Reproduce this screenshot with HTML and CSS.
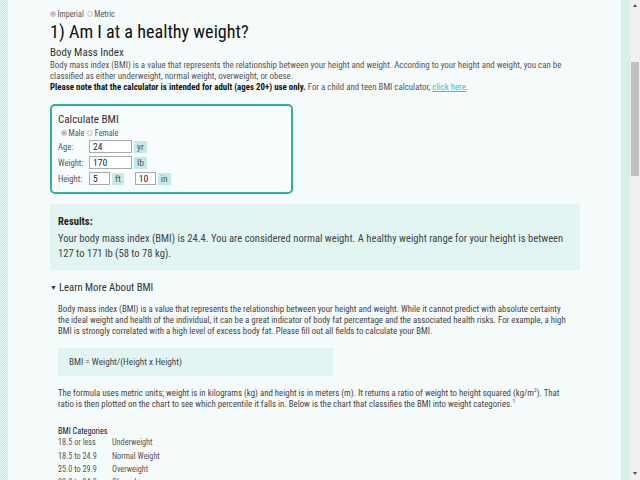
FILE: index.html
```html
<!DOCTYPE html>
<html lang="en">
<head>
<meta charset="utf-8">
<title>BMI Calculator</title>
<link rel="stylesheet" href="styles.css">
</head>
<body>
<div class="frame">
  <main class="content">
    <div class="units">
      <span class="radio checked"></span><span class="rlabel">Imperial</span>
      <span class="radio"></span><span class="rlabel">Metric</span>
    </div>
    <h1 class="title">1) Am I at a healthy weight?</h1>
    <h2 class="subtitle">Body Mass Index</h2>
    <p class="intro">Body mass index (BMI) is a value that represents the relationship between your height and weight. According to your height and weight, you can be classified as either underweight, normal weight, overweight, or obese.<br><strong>Please note that the calculator is intended for adult (ages 20+) use only.</strong> For a child and teen BMI calculator, <a href="#" class="link">click here</a>.</p>

    <section class="calc">
      <h3 class="calc-title">Calculate BMI</h3>
      <div class="sex">
        <span class="radio checked"></span><span class="rlabel">Male</span>
        <span class="radio"></span><span class="rlabel">Female</span>
      </div>
      <div class="row">
        <span class="lbl">Age:</span>
        <span class="inp wide">24</span><span class="unit">yr</span>
      </div>
      <div class="row">
        <span class="lbl">Weight:</span>
        <span class="inp wide">170</span><span class="unit">lb</span>
      </div>
      <div class="row">
        <span class="lbl">Height:</span>
        <span class="inp short">5</span><span class="unit">ft</span>
        <span class="inp short gapl">10</span><span class="unit">in</span>
      </div>
    </section>

    <section class="results">
      <h4 class="results-title">Results:</h4>
      <p class="results-text">Your body mass index (BMI) is 24.4. You are considered normal weight. A healthy weight range for your height is between 127 to 171 lb (58 to 78 kg).</p>
    </section>

    <div class="more">
      <div class="more-head"><span class="tri">&#9660;</span>Learn More About BMI</div>
      <div class="more-body">
        <p class="para">Body mass index (BMI) is a value that represents the relationship between your height and weight. While it cannot predict with absolute certainty the ideal weight and health of the individual, it can be a great indicator of body fat percentage and the associated health risks. For example, a high BMI is strongly correlated with a high level of excess body fat. Please fill out all fields to calculate your BMI.</p>
        <div class="formula">BMI = Weight/(Height x Height)</div>
        <p class="para">The formula uses metric units; weight is in kilograms (kg) and height is in meters (m). It returns a ratio of weight to height squared (kg/m<sup>2</sup>). That ratio is then plotted on the chart to see which percentile it falls in. Below is the chart that classifies the BMI into weight categories.<sup>1</sup></p>
        <table class="cats">
          <thead><tr><th colspan="2">BMI Categories</th></tr></thead>
          <tbody>
            <tr><td>18.5 or less</td><td>Underweight</td></tr>
            <tr><td>18.5 to 24.9</td><td>Normal Weight</td></tr>
            <tr><td>25.0 to 29.9</td><td>Overweight</td></tr>
            <tr><td>30.0 to 34.9</td><td>Obese I</td></tr>
            <tr><td>35.0 to 39.9</td><td>Obese II</td></tr>
          </tbody>
        </table>
      </div>
    </div>
  </main>
</div>
<div class="scrollbar">
  <span class="arrow up"></span>
  <span class="thumb"></span>
  <span class="arrow down"></span>
</div>
</body>
</html>
```

FILE: styles.css
```css
html, body {
  margin: 0;
  padding: 0;
  height: 100%;
  overflow: hidden;
}
body {
  font-family: Roboto, "Liberation Sans", sans-serif;
  font-stretch: 86%;
  color: #444;
  background-color: #cfeee9;
  background-image:
    repeating-conic-gradient(#c4ebe5 0 25%, #e2f6f3 0 50%);
  background-size: 2px 2px;
}
.frame {
  margin: 0 19px 0 8px;
  height: 100%;
  background: #f5fbfb;
}
.content {
  padding: 9px 0 0 42px;
  width: 530px;
}
.units, .sex {
  display: flex;
  align-items: center;
  font-size: 8.2px;
  color: #555;
  height: 10px;
}
.radio {
  width: 4px;
  height: 4px;
  border: 1px solid #c8c8c8;
  border-radius: 50%;
  background: #f4f4f4;
  margin-right: 1.5px;
}
.radio.checked {
  background: #8a8a8a;
  box-shadow: inset 0 0 0 1px #eee;
}
.rlabel { margin-right: 3px; }
.title {
  margin: 1px 0 0;
  font-size: 18.2px;
  font-stretch: 87%;
  font-weight: 400;
  color: #111;
  line-height: 24px;
}
.subtitle {
  margin: 2px 0 0;
  font-size: 11px;
  font-weight: 400;
  color: #333;
  line-height: 14px;
}
.intro {
  margin: 0;
  font-size: 8.9px;
  line-height: 11.2px;
  color: #555;
}
.intro strong { color: #111; font-weight: 700; }
.link { color: #4cbcae; text-decoration: underline; }
.calc {
  margin-top: 10px;
  width: 227px;
  border: 2px solid #2fb19e;
  border-radius: 5px;
  background: #f8fcfc;
  padding: 7px 6px 4px;
}
.calc-title {
  margin: 0 0 1px;
  font-size: 11.1px;
  font-weight: 400;
  color: #333;
  line-height: 14px;
}
.sex { margin-left: 3px; margin-bottom: 2.5px; }
.row {
  display: flex;
  align-items: center;
  height: 13px;
  margin-bottom: 3px;
}
.lbl {
  width: 31px;
  color: #555;
  font-size: 8.6px;
}
.inp {
  box-sizing: border-box;
  height: 13px;
  border: 1px solid #aaa;
  background: #fff;
  padding: 0 3px;
  line-height: 11px;
  font-size: 9.5px;
  color: #222;
}
.inp.wide { width: 43px; }
.inp.short { width: 21px; }
.gapl { margin-left: 11px; }
.unit {
  margin-left: 2px;
  height: 12px;
  line-height: 12px;
  padding: 0 3px;
  background: #c3ebe5;
  color: #555;
  font-size: 9.5px;
}
.results {
  margin-top: 10px;
  width: 514px;
  background: #e2f5f2;
  padding: 11px 8px 9px;
}
.results-title {
  margin: 0;
  font-size: 10.6px;
  font-weight: 700;
  color: #222;
  line-height: 14px;
}
.results-text {
  margin: 1.5px 0 0;
  font-size: 10.6px;
  line-height: 15px;
  color: #444;
}
.more { margin-top: 11px; }
.more-head {
  font-size: 10.7px;
  color: #333;
  line-height: 14px;
}
.tri { font-size: 7px; margin-right: 2px; vertical-align: 1px; }
.more-body { padding: 9px 0 0 8px; }
.para {
  margin: 0;
  font-size: 8.85px;
  line-height: 11.2px;
  color: #444;
  width: 514px;
}
.para sup { font-size: 5.5px; line-height: 0; }
.formula {
  margin: 11px 0 12px;
  width: 264px;
  height: 28px;
  padding-left: 11px;
  background: #e2f5f2;
  font-size: 9.2px;
  line-height: 28px;
  color: #444;
}
.cats {
  margin-top: 15px;
  border-collapse: collapse;
  font-size: 8.2px;
  color: #555;
}
.cats th {
  text-align: left;
  font-weight: 400;
  color: #111;
  padding: 0;
  height: 10px;
}
.cats td {
  padding: 0;
  height: 13.3px;
}
.cats td:first-child { width: 54px; }
.scrollbar {
  position: fixed;
  top: 0;
  right: 0;
  width: 10px;
  height: 100%;
  background: #f0f0f0;
}
.thumb {
  position: absolute;
  left: 1px;
  top: 62px;
  width: 8px;
  height: 114px;
  background: #c1c1c1;
}
.arrow {
  position: absolute;
  left: 3px;
  width: 0;
  height: 0;
  border-left: 2px solid transparent;
  border-right: 2px solid transparent;
}
.arrow.up { top: 4px; border-bottom: 3px solid #505050; }
.arrow.down { bottom: 5px; border-top: 3px solid #505050; }
```
